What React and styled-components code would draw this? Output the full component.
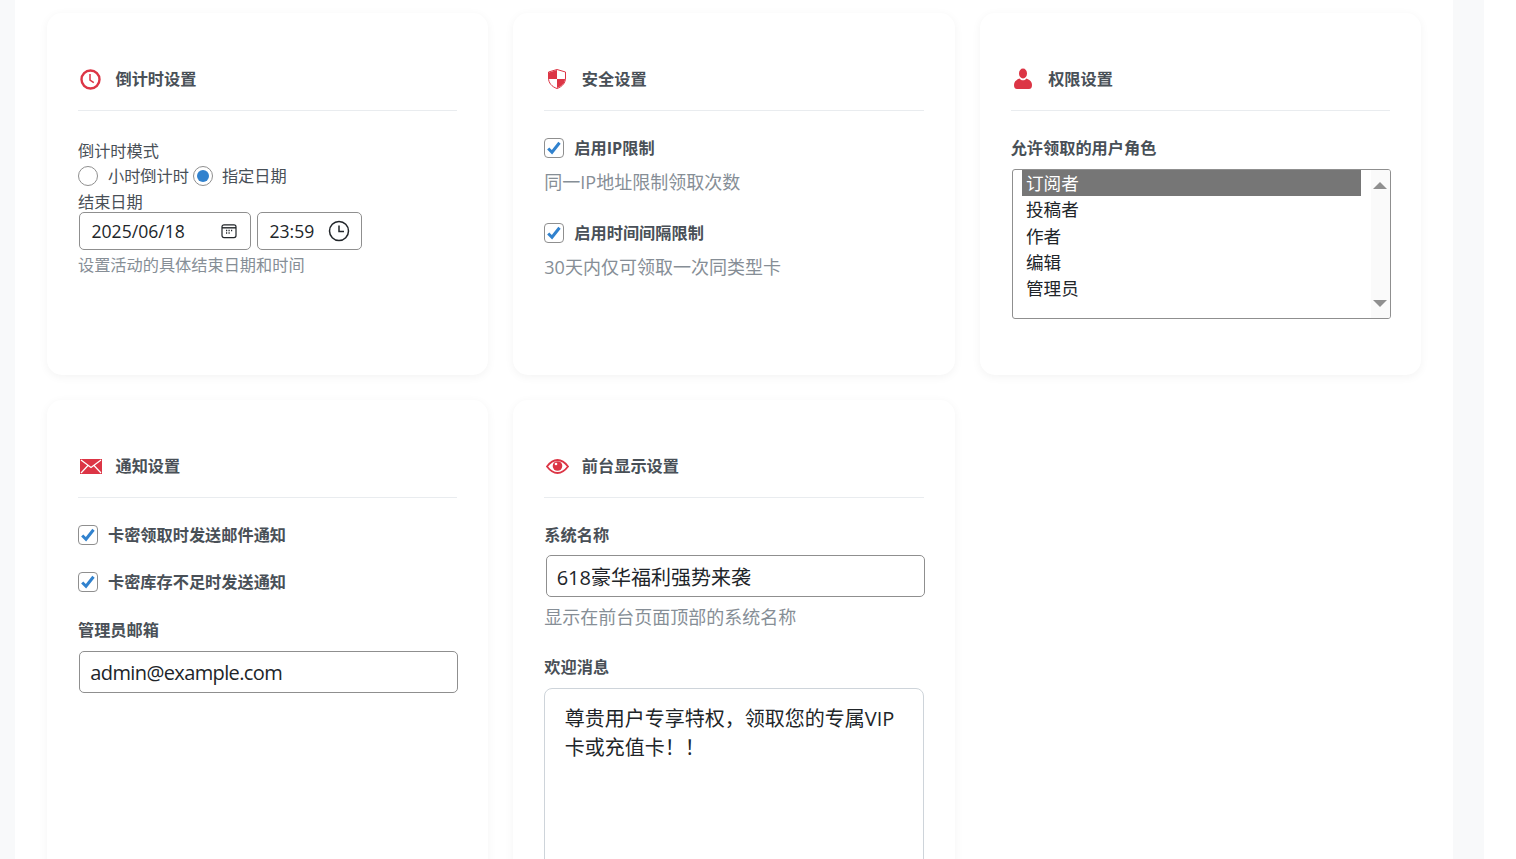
import React from "react";
import styled, { createGlobalStyle } from "styled-components";

const FONT = `"Open Sans", "Noto Sans CJK SC", sans-serif`;
const RED = "#dc3545";

const Global = createGlobalStyle`
  html, body { margin: 0; padding: 0; background: #fff; }
  body { font-family: ${FONT}; overflow: hidden; }
  * { box-sizing: border-box; }
`;

const Page = styled.div`
  width: 1516px;
  height: 859px;
  overflow: hidden;
  background: #fff;
`;
const Backdrop = styled.div`
  width: 1484px;
  height: 859px;
  padding: 0 31px 0 15px;
  background: #f8f9fa;
`;
const Container = styled.main`
  width: 1438px;
  height: 859px;
  padding: 13px 32px 0;
  background: #fff;
`;
const Grid = styled.div`
  display: grid;
  grid-template-columns: repeat(3, minmax(0, 1fr));
  grid-auto-rows: 362px;
  gap: 25px;
`;
const Card = styled.section`
  padding: 30px 31px;
  background: #fff;
  border-radius: 15px;
  box-shadow: 0 2px 10px rgba(0, 0, 0, 0.05);
  height: ${(p) => (p.$tall ? "600px" : "auto")};
`;
const Header = styled.header`
  height: 68px;
  padding-top: 5px;
  display: flex;
  align-items: center;
  border-bottom: 1px solid #e9ecef;
`;
const IconSlot = styled.span`
  width: 35.5px;
  margin-left: 2px;
  padding-left: ${(p) => p.$pad || 0}px;
  display: flex;
  align-items: center;
  flex: none;
`;
const Title = styled.h3`
  margin: 0;
  font-size: 16.2px;
  font-weight: 700;
  line-height: 24px;
  color: #495057;
`;
const Body = styled.div`
  padding-top: ${(p) => p.$top || 25}px;
`;
const PlainLabel = styled.div`
  font-size: 16.2px;
  line-height: ${(p) => p.$line || 24}px;
  height: ${(p) => p.$h || 24}px;
  color: #495057;
`;
const FieldLabel = styled.div`
  font-size: 16.2px;
  font-weight: 700;
  line-height: 24px;
  color: #495057;
  margin-top: ${(p) => p.$top || 0}px;
`;
const RadioRow = styled.div`
  display: flex;
  align-items: center;
  height: 26px;
  font-size: 16.2px;
  color: #495057;
`;
const Radio = styled.span`
  width: 20px;
  height: 20px;
  border-radius: 50%;
  border: 1px solid #8f8f8f;
  background: #fff;
  margin-right: ${(p) => (p.$on ? 9 : 10)}px;
  display: flex;
  align-items: center;
  justify-content: center;
  flex: none;
  &::after {
    content: "";
    display: ${(p) => (p.$on ? "block" : "none")};
    width: 12px;
    height: 12px;
    border-radius: 50%;
    background: #3182ce;
  }
`;
const RadioText = styled.span`
  margin: -1px 4px 0 0;
  line-height: 24px;
`;
const DateRow = styled.div`
  display: flex;
  gap: 6px;
  margin-left: 1px;
`;
const Picker = styled.div`
  width: ${(p) => p.$w}px;
  height: 38px;
  padding: 0 ${(p) => p.$right}px 0 11.5px;
  border: 1px solid #8f8f8f;
  border-radius: 5px;
  display: flex;
  align-items: center;
  justify-content: space-between;
  font-size: 17.6px;
  color: #212529;
`;
const Help = styled.div`
  font-size: ${(p) => p.$size || 18}px;
  line-height: 24px;
  color: #868e96;
  margin-top: ${(p) => p.$top || 0}px;
`;
const CheckRow = styled.div`
  display: flex;
  align-items: center;
  height: 24px;
  font-size: 16.2px;
  font-weight: 700;
  color: #495057;
  margin-top: ${(p) => p.$top || 0}px;
`;
const CheckText = styled.span`
  margin-top: -1px;
  line-height: 24px;
`;
const CheckBox = styled.span`
  width: 20px;
  height: 20px;
  border: 1px solid #8f8f8f;
  border-radius: 4px;
  background: #fff;
  margin-right: 10px;
  display: flex;
  align-items: center;
  justify-content: center;
  flex: none;
`;
const TextField = styled.input`
  display: block;
  width: 379px;
  height: 42px;
  margin: ${(p) => p.$top || 0}px 0 0 1.33px;
  padding: 0 10px;
  border: 1px solid #8f8f8f;
  border-radius: 5px;
  font-family: ${FONT};
  font-size: 20px;
  letter-spacing: ${(p) => (p.$tight ? "-0.62px" : "normal")};
  color: #212529;
  background: #fff;
  outline: none;
`;
const TextArea = styled.textarea`
  display: block;
  width: 380px;
  height: 300px;
  margin-top: 9px;
  padding: 15px 19.5px;
  border: 1px solid #ced4da;
  border-radius: 8px;
  font-family: ${FONT};
  font-size: 20px;
  line-height: 29px;
  color: #212529;
  background: #fff;
  resize: none;
  outline: none;
`;
const ListBox = styled.div`
  display: flex;
  width: 379px;
  height: 150px;
  margin: 9px 0 0 1.33px;
  border: 1px solid #8f8f8f;
  border-radius: 3px;
  overflow: hidden;
`;
const Options = styled.ul`
  flex: 1;
  margin: 0;
  padding: 0 10px 0 9px;
  list-style: none;
`;
const Option = styled.li`
  height: 26.25px;
  line-height: 26px;
  padding-left: 4px;
  font-size: 17.6px;
  color: ${(p) => (p.$selected ? "#fff" : "#212529")};
  background: ${(p) => (p.$selected ? "#767676" : "transparent")};
`;
const ScrollBar = styled.div`
  width: 19px;
  background: #fafafa;
  display: flex;
  flex-direction: column;
  justify-content: space-between;
  align-items: center;
  padding: 12px 0 11px;
`;
const Arrow = styled.span`
  width: 0;
  height: 0;
  border-left: 7px solid transparent;
  border-right: 7px solid transparent;
  border-${(p) => (p.$down ? "top" : "bottom")}: 7px solid #8f8f8f;
`;

const ClockIcon = () => (
  <svg width="21" height="21" viewBox="0 0 21 21">
    <circle cx="10.500" cy="10.500" r="9" fill="none" stroke={RED} strokeWidth="2.400" />
    <path d="M10 5v6l3.800 2.600" fill="none" stroke={RED} strokeWidth="1.500" />
  </svg>
);
const ShieldIcon = () => (
  <svg width="18" height="20" viewBox="0 0 18 20">
    <path d="M9 .5l8.500 2.500v6c0 5-3.400 8.800-8.500 10.500C3.900 17.800.5 14 .5 9V3z" fill="#fff" stroke={RED} strokeWidth="1" />
    <path d="M9 1L1 3.400V10H9zM9 10v9c4.500-1.700 8-4.500 8-9z" fill={RED} />
  </svg>
);
const UserIcon = () => (
  <svg width="20" height="22" viewBox="0 0 20 22">
    <ellipse cx="10" cy="5.500" rx="4" ry="5" fill={RED} />
    <path d="M1 17c0-4 3-5.500 5.500-6.500 1 1.300 2.200 1.800 3.500 1.800s2.500-.5 3.500-1.800C16 11.500 19 13 19 17c0 2.500-1 4-3 4H4c-2 0-3-1.500-3-4z" fill={RED} />
  </svg>
);
const MailIcon = () => (
  <svg width="22" height="15" viewBox="0 0 22 15">
    <rect width="22" height="15" fill={RED} />
    <path d="M1 1l10 7.500L21 1M1 14l7-7.500M21 14l-7-7.500" fill="none" stroke="#fff" strokeWidth="1.200" />
  </svg>
);
const EyeIcon = () => (
  <svg width="23" height="15" viewBox="0 0 23 15">
    <path d="M1 7.500c3-4 6.500-6.500 10.500-6.500S19 3.500 22 7.500c-3 4-6.500 6.500-10.500 6.500S4 11.500 1 7.500z" fill="none" stroke={RED} strokeWidth="1.800" />
    <circle cx="11.500" cy="7" r="4.800" fill={RED} />
    <circle cx="10" cy="5" r="1.300" fill="#fff" />
  </svg>
);
const CheckMark = () => (
  <svg width="16" height="14" viewBox="0 0 16 14">
    <path d="M2.200 7.500l3.800 3.800 7.500-9.500" fill="none" stroke="#3182ce" strokeWidth="3" />
  </svg>
);
const CalendarIcon = () => (
  <svg width="16" height="16" viewBox="0 0 16 16">
    <rect x="1" y="1.800" width="14" height="12.800" rx="2" fill="none" stroke="#212529" strokeWidth="1.200" />
    <path d="M1 4.800h14" stroke="#212529" strokeWidth="1.400" />
    <path d="M5 7.500h1.200M7.500 7.500h1.200M10 7.500h1.200M5 10h1.200M7.500 10h1.200" stroke="#212529" strokeWidth="1.300" />
  </svg>
);
const TimeIcon = () => (
  <svg width="22" height="22" viewBox="0 0 22 22">
    <circle cx="11" cy="11" r="9.500" fill="none" stroke="#212529" strokeWidth="1.500" />
    <path d="M11 5.500v6h5" fill="none" stroke="#212529" strokeWidth="1.500" />
  </svg>
);

const CardHead = ({ icon, pad, children }) => (
  <Header>
    <IconSlot $pad={pad}>{icon}</IconSlot>
    <Title>{children}</Title>
  </Header>
);
const Check = ({ top, children }) => (
  <CheckRow $top={top}>
    <CheckBox><CheckMark /></CheckBox>
    <CheckText>{children}</CheckText>
  </CheckRow>
);

const roles = ["订阅者", "投稿者", "作者", "编辑", "管理员"];

export default function App() {
  return (
    <Page>
      <Global />
      <Backdrop>
        <Container>
          <Grid>
            <Card>
              <CardHead icon={<ClockIcon />}>倒计时设置</CardHead>
              <Body $top={28}>
                <PlainLabel>倒计时模式</PlainLabel>
                <RadioRow>
                  <Radio />
                  <RadioText>小时倒计时</RadioText>
                  <Radio $on />
                  <RadioText>指定日期</RadioText>
                </RadioRow>
                <PlainLabel $h={23} $line={26}>结束日期</PlainLabel>
                <DateRow>
                  <Picker $w={172} $right={13}>2025/06/18<CalendarIcon /></Picker>
                  <Picker $w={105} $right={11}>23:59<TimeIcon /></Picker>
                </DateRow>
                <Help $size={16.2} $top={3}>设置活动的具体结束日期和时间</Help>
              </Body>
            </Card>
            <Card>
              <CardHead icon={<ShieldIcon />} pad={2}>安全设置</CardHead>
              <Body>
                <Check>启用IP限制</Check>
                <Help $top={10}>同一IP地址限制领取次数</Help>
                <Check top={27}>启用时间间隔限制</Check>
                <Help $top={10}>30天内仅可领取一次同类型卡</Help>
              </Body>
            </Card>
            <Card>
              <CardHead icon={<UserIcon />}>权限设置</CardHead>
              <Body>
                <FieldLabel>允许领取的用户角色</FieldLabel>
                <ListBox>
                  <Options>
                    {roles.map((r, i) => (
                      <Option key={r} $selected={i === 0}>{r}</Option>
                    ))}
                  </Options>
                  <ScrollBar>
                    <Arrow />
                    <Arrow $down />
                  </ScrollBar>
                </ListBox>
              </Body>
            </Card>
            <Card $tall>
              <CardHead icon={<MailIcon />}>通知设置</CardHead>
              <Body>
                <Check>卡密领取时发送邮件通知</Check>
                <Check top={23}>卡密库存不足时发送通知</Check>
                <FieldLabel $top={24}>管理员邮箱</FieldLabel>
                <TextField $top={9} $tight defaultValue="admin@example.com" />
              </Body>
            </Card>
            <Card $tall>
              <CardHead icon={<EyeIcon />}>前台显示设置</CardHead>
              <Body>
                <FieldLabel>系统名称</FieldLabel>
                <TextField $top={8} defaultValue="618豪华福利强势来袭" />
                <Help $top={8}>显示在前台页面顶部的系统名称</Help>
                <FieldLabel $top={26}>欢迎消息</FieldLabel>
                <TextArea defaultValue="尊贵用户专享特权，领取您的专属VIP卡或充值卡！！" />
              </Body>
            </Card>
          </Grid>
        </Container>
      </Backdrop>
    </Page>
  );
}
